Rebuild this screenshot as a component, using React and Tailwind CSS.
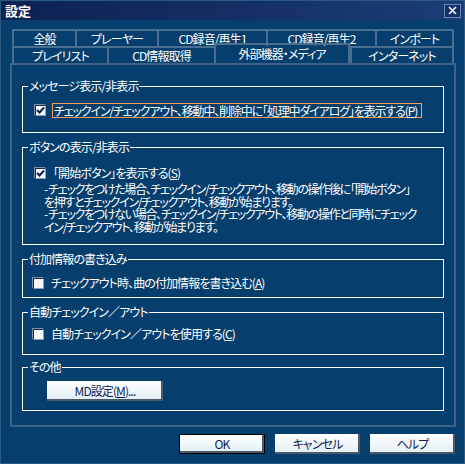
import React from "react";

const FONT = "font-['Noto_Sans_CJK_JP','Noto_Sans',sans-serif] [font-feature-settings:'palt'] tracking-[-0.9px]";

function Tab({ w, label, last, selected }) {
  return (
    <div
      className={`flex items-center justify-center ${selected ? "h-[20px] -mt-[3px] border-x-2 border-t-2" : "h-[17px] border-l-2 border-t-2"} ${last ? "border-r-2" : ""} border-[#4a6e8f] text-white text-[12px] leading-none`}
      style={{ width: w }}
    >
      {label}
    </div>
  );
}

function Check({ checked }) {
  return (
    <div className="w-[11px] h-[11px] shrink-0 bg-[#f4f6fa] border border-t-[#1a2850] border-l-[#1a2850] border-r-[#8aa0b8] border-b-[#8aa0b8] flex items-center justify-center shadow-[-1px_-1px_0_#7890a8]">
      {checked && (
        <svg width="9" height="9" viewBox="0 0 9 9">
          <path d="M1 4 L3.5 6.5 L8 1.5" stroke="#0e1e50" strokeWidth="2" fill="none" />
        </svg>
      )}
    </div>
  );
}

function Group({ title, h, children, className = "" }) {
  return (
    <div className={`relative border border-white ${className}`} style={{ height: h }}>
      <span className="absolute -top-[8px] left-[5px] bg-[#063e6d] px-[1px] text-white text-[12px] leading-[14px]">{title}</span>
      {children}
    </div>
  );
}

function Btn({ label, w, def }) {
  return (
    <div
      className={`h-[20px] flex items-center justify-center bg-gradient-to-b from-white to-[#dfeef3] text-[#101c58] text-[12px] leading-none shadow-[inset_-2px_-2px_0_#4a5a68] ${def ? "border border-black" : ""}`}
      style={{ width: w }}
    >
      {label}
    </div>
  );
}

export default function App() {
  return (
    <div className={`w-[465px] h-[464px] bg-[#063e6d] border border-[#2c5a82] flex flex-col ${FONT}`}>
      {/* title bar */}
      <div className="h-[19px] shrink-0 bg-gradient-to-r from-[#0d2152] to-[#1c3d78] flex items-center justify-between pl-[4px] pr-[3px]">
        <span className="text-white text-[13px] font-bold leading-none tracking-normal">設定</span>
        <div className="w-[17px] h-[14px] border border-[#6a88b0] bg-[#14306a] flex items-center justify-center">
          <svg width="9" height="9" viewBox="0 0 9 9">
            <path d="M1 1 L8 8 M8 1 L1 8" stroke="white" strokeWidth="1.6" />
          </svg>
        </div>
      </div>

      {/* tabs */}
      <div className="mt-[9px] pl-[11px] flex flex-col">
        <div className="flex">
          <Tab w={63} label="全般" />
          <Tab w={82} label="プレーヤー" />
          <Tab w={109} label="CD録音/再生1" />
          <Tab w={109} label="CD録音/再生2" />
          <Tab w={79} label="インポート" last />
        </div>
        <div className="flex items-end">
          <Tab w={95} label="プレイリスト" />
          <Tab w={107} label="CD情報取得" />
          <Tab w={136} label="外部機器・メディア" selected />
          <Tab w={104} label="インターネット" last />
        </div>
      </div>

      {/* panel */}
      <div className="ml-[9px] w-[446px] h-[364px] border-2 border-[#3f6384] pl-[10px] pr-[10px] pt-[21px] flex flex-col">
        <Group title="メッセージ表示/非表示" h={47}>
          <div className="flex items-center mt-[16px] ml-[12px] gap-[6px]">
            <Check checked />
            <div className="border border-[#f0a060] h-[15px] w-[370px] flex items-center px-[1px] text-white text-[12px] leading-none whitespace-nowrap tracking-[-1.15px]">
              チェックイン/チェックアウト、移動中、削除中に「処理中ダイアログ」を表示する(<span className="underline">P</span>)
            </div>
          </div>
        </Group>

        <Group title="ボタンの表示/非表示" h={98} className="mt-[14px]">
          <div className="flex items-center mt-[18px] ml-[12px] gap-[7px]">
            <Check checked />
            <span className="text-white text-[12px] leading-[14px] whitespace-nowrap">「開始ボタン」を表示する(<span className="underline">S</span>)</span>
          </div>
          <div className="mt-[3px] ml-[21px] text-white text-[12px] leading-[12.5px] whitespace-nowrap tracking-[-1.3px]">
            <div>- チェックをつけた場合、チェックイン/チェックアウト、移動の操作後に「開始ボタン」</div>
            <div>を押すとチェックイン/チェックアウト、移動が始まります。</div>
            <div>- チェックをつけない場合、チェックイン/チェックアウト、移動の操作と同時にチェック</div>
            <div>イン/チェックアウト、移動が始まります。</div>
          </div>
        </Group>

        <Group title="付加情報の書き込み" h={39} className="mt-[14px]">
          <div className="flex items-center mt-[16px] ml-[10px] gap-[7px]">
            <Check />
            <span className="text-white text-[12px] leading-[14px] whitespace-nowrap">チェックアウト時、曲の付加情報を書き込む(<span className="underline">A</span>)</span>
          </div>
        </Group>

        <Group title="自動チェックイン／アウト" h={43} className="mt-[14px]">
          <div className="flex items-center mt-[14px] ml-[10px] gap-[7px]">
            <Check />
            <span className="text-white text-[12px] leading-[14px] whitespace-nowrap">自動チェックイン／アウトを使用する(<span className="underline">C</span>)</span>
          </div>
        </Group>

        <Group title="その他" h={44} className="mt-[12px]">
          <div className="mt-[13px] ml-[24px]">
            <Btn w={116} label={<span>MD設定(<span className="underline">M</span>)...</span>} />
          </div>
        </Group>
      </div>

      {/* bottom buttons */}
      <div className="mt-[7px] flex justify-end gap-[10px] pr-[9px]">
        <Btn w={86} label="OK" def />
        <Btn w={85} label="キャンセル" />
        <Btn w={85} label="ヘルプ" />
      </div>
    </div>
  );
}
